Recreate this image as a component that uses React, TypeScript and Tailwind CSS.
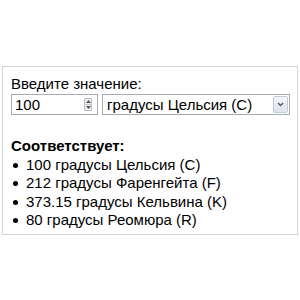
import React from "react";

const results = [
  "100 градусы Цельсия (C)",
  "212 градусы Фаренгейта (F)",
  "373.15 градусы Кельвина (K)",
  "80 градусы Реомюра (R)",
];

function Spinner() {
  return (
    <div className="flex h-[13px] w-[8px] flex-col overflow-hidden rounded-[1px] border border-[#b8bcc4] bg-[#eef0f3]">
      <div className="flex flex-1 items-center justify-center border-b border-[#c4c8cf]">
        <svg width="5" height="3" viewBox="0 0 5 3">
          <path d="M0 3 L2.5 0 L5 3 Z" fill="#555" />
        </svg>
      </div>
      <div className="flex flex-1 items-center justify-center">
        <svg width="5" height="3" viewBox="0 0 5 3">
          <path d="M0 0 L2.5 3 L5 0 Z" fill="#555" />
        </svg>
      </div>
    </div>
  );
}

export default function App() {
  return (
    <div
      className="h-[300px] w-[300px] bg-white pl-[2px] pt-[66px] text-[15px] text-black"
      style={{ fontFamily: '"Liberation Sans", Arial, sans-serif' }}
    >
      <div className="h-[169px] w-[296px] border border-[#d4d4d4] pl-[8px] pt-[8px]">
        <div className="leading-[18px]">Введите значение:</div>
        <div className="mt-[1px] flex items-center gap-[4px]">
          <div className="flex h-[21px] w-[87px] items-center border border-[#a7abb3] pl-[3px] pr-[5px]">
            <span className="flex-1 leading-[18px]">100</span>
            <Spinner />
          </div>
          <div className="flex h-[21px] w-[188px] items-center border border-[#a7abb3] pl-[4px] pr-[1px]">
            <span className="flex-1 leading-[18px]">градусы Цельсия (C)</span>
            <div className="flex h-[17px] w-[15px] items-center justify-center rounded-[2px] border border-[#c3cbd8] bg-gradient-to-b from-[#f4f6fa] to-[#dde3ee]">
              <svg width="7" height="5" viewBox="0 0 7 5">
                <path d="M1 1 L3.5 3.5 L6 1" stroke="#4d5563" strokeWidth="1.4" fill="none" />
              </svg>
            </div>
          </div>
        </div>
        <div className="mt-[22px] font-bold leading-[18px]">Соответствует:</div>
        <ul className="mt-[1px]">
          {results.map((r) => (
            <li key={r} className="flex items-center leading-[18.4px]">
              <span className="ml-[2px] mr-[8px] inline-block h-[5px] w-[5px] rounded-full bg-black" />
              {r}
            </li>
          ))}
        </ul>
      </div>
    </div>
  );
}
